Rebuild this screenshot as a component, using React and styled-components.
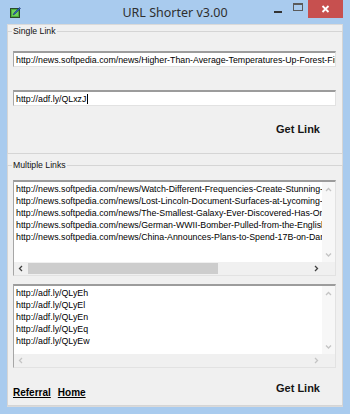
import React from "react";
import styled, { createGlobalStyle } from "styled-components";

const Global = createGlobalStyle`
  html, body { margin: 0; padding: 0; }
  body { background: #a9cbee; font-family: "Liberation Sans", Arial, sans-serif; }
  * { box-sizing: border-box; }
`;

const Frame = styled.div`
  width: 350px;
  height: 414px;
  background: #a9cbee;
  padding: 0 7px 7px;
  display: flex;
  flex-direction: column;
  overflow: hidden;
`;

const TitleBar = styled.div`
  height: 24px;
  display: grid;
  grid-template-columns: 1fr auto 1fr;
  align-items: start;
`;

const AppIcon = styled.div`
  padding: 7px 0 0 3px;
  display: flex;
`;

const Title = styled.div`
  font-family: "Noto Sans", "Open Sans", sans-serif;
  font-size: 12.5px;
  line-height: 16px;
  padding-top: 5px;
  color: #2f2f2f;
  white-space: nowrap;
`;

const Controls = styled.div`
  display: flex;
  justify-content: flex-end;
  align-items: flex-start;
`;

const CtrlButton = styled.div`
  width: ${(p) => p.$w}px;
  height: 18px;
  display: flex;
  align-items: ${(p) => (p.$low ? "flex-end" : "center")};
  justify-content: center;
  padding-bottom: ${(p) => (p.$low ? "5px" : "0")};
  background: ${(p) => p.$bg || "transparent"};
`;

const MinDash = styled.div`
  width: 8px;
  height: 2px;
  background: #333;
`;

const MaxBox = styled.div`
  width: 10px;
  height: 8px;
  border: 1px solid #5a5a5a;
  border-top-width: 2px;
  margin-top: -4px;
`;

const Client = styled.div`
  flex: 1;
  background: #f0f0f0;
  border: 1px solid #dadada;
  display: flex;
  flex-direction: column;
`;

const Group = styled.fieldset`
  margin: ${(p) => p.$mt}px -1px 0;
  padding: ${(p) => p.$pt}px 6px ${(p) => p.$pb}px 5px;
  border: 1px solid #d5d5d5;
  min-width: 0;
  display: flex;
  flex-direction: column;
`;

const Legend = styled.legend`
  font-size: 8.7px;
  line-height: 10px;
  padding: 0 1px;
  margin-left: -1px;
  color: #111;
`;

const Field = styled.div`
  height: 16px;
  margin-top: ${(p) => p.$mt || 0}px;
  background: #fff;
  border-style: solid;
  border-width: 2px 1px 1px 1px;
  border-color: #9c9c9c #e2e2e2 #e2e2e2 #a6a6a6;
  font-size: 8.8px;
  line-height: 12px;
  padding: 0 0 0 2px;
  white-space: pre;
  overflow: hidden;
  color: #000;
  display: flex;
  align-items: center;
`;

const Caret = styled.span`
  display: inline-block;
  width: 1px;
  height: 10px;
  background: #000;
  margin-left: 1px;
`;

const ActionRow = styled.div`
  margin-top: ${(p) => p.$mt}px;
  height: ${(p) => p.$h}px;
  display: flex;
  justify-content: space-between;
  align-items: flex-start;
  padding-right: 16px;
`;

const GetLink = styled.div`
  margin-left: auto;
  font-size: 11px;
  line-height: 13px;
  font-weight: bold;
  color: #151515;
`;

const LinkList = styled.div`
  display: flex;
  gap: 7px;
  padding-top: 6px;
`;

const NavLink = styled.a`
  font-size: 10px;
  line-height: 10px;
  font-weight: bold;
  color: #000;
  text-decoration: underline;
`;

const ListBox = styled.div`
  height: ${(p) => p.$h}px;
  margin-top: ${(p) => p.$mt || 0}px;
  border-style: solid;
  border-width: 2px 1px 1px 1px;
  border-color: #9c9c9c #e2e2e2 #e2e2e2 #a6a6a6;
  background: #fff;
  display: grid;
  grid-template-columns: 1fr 13px;
  grid-template-rows: 1fr 13px;
`;

const ListText = styled.div`
  padding: 1px 0 0 2px;
  font-size: 8.8px;
  line-height: 12px;
  white-space: pre;
  overflow: hidden;
  color: #000;
`;

const VScroll = styled.div`
  background: #f7f7f7;
  display: flex;
  flex-direction: column;
  justify-content: space-between;
  align-items: center;
  padding: 5px 0 4px;
`;

const HScroll = styled.div`
  background: #f0f0f0;
  display: flex;
  align-items: stretch;
`;

const ArrowCell = styled.div`
  width: 13px;
  display: flex;
  align-items: center;
  justify-content: center;
`;

const Track = styled.div`
  flex: 1;
  display: flex;
  align-items: stretch;
  padding: 1px 0;
`;

const Thumb = styled.div`
  width: 190px;
  margin-left: 1px;
  background: #cdcdcd;
`;

const Corner = styled.div`
  background: #f0f0f0;
`;

const Chevron = ({ dir, color }) => {
  const pts = {
    up: "1,4 3.5,1.5 6,4",
    down: "1,1.5 3.5,4 6,1.5",
    left: "4,1 1.5,3.5 4,6",
    right: "2,1 4.5,3.5 2,6",
  }[dir];
  const vertical = dir === "up" || dir === "down";
  return (
    <svg width={vertical ? 7 : 6} height={vertical ? 6 : 7} viewBox={vertical ? "0 0 7 6" : "0 0 6 7"}>
      <polyline points={pts} fill="none" stroke={color} strokeWidth="1.3" />
    </svg>
  );
};

const Icon = () => (
  <svg width="11" height="11" viewBox="0 0 11 11">
    <rect x="0.5" y="1.5" width="9" height="9" fill="#4caf3a" stroke="#2a4a2a" />
    <rect x="2" y="3" width="6" height="6" fill="#6fd15a" />
    <path d="M3 8 L4 6 L9.5 0.5 L10.5 1.5 L5 7 Z" fill="#2d5fb5" stroke="#1b2f6a" strokeWidth="0.5" />
  </svg>
);

const CloseX = () => (
  <svg width="9" height="8" viewBox="0 0 9 8">
    <path d="M1.5 1 L7.5 7 M7.5 1 L1.5 7" stroke="#fff" strokeWidth="1.8" />
  </svg>
);

const longUrls = [
  "http://news.softpedia.com/news/Watch-Different-Frequencies-Create-Stunning-Patterns-in-Sand-Video-405478.shtml",
  "http://news.softpedia.com/news/Lost-Lincoln-Document-Surfaces-at-Lycoming-College-405470.shtml",
  "http://news.softpedia.com/news/The-Smallest-Galaxy-Ever-Discovered-Has-Only-1000-Stars-405463.shtml",
  "http://news.softpedia.com/news/German-WWII-Bomber-Pulled-from-the-English-Channel-405455.shtml",
  "http://news.softpedia.com/news/China-Announces-Plans-to-Spend-17B-on-Dams-405449.shtml",
];

const shortUrls = [
  "http://adf.ly/QLyEh",
  "http://adf.ly/QLyEl",
  "http://adf.ly/QLyEn",
  "http://adf.ly/QLyEq",
  "http://adf.ly/QLyEw",
];

const List = ({ lines, h, mt, active }) => (
  <ListBox $h={h} $mt={mt}>
    <ListText>{lines.join("\n")}</ListText>
    <VScroll>
      <Chevron dir="up" color="#c4c4c4" />
      <Chevron dir="down" color="#c4c4c4" />
    </VScroll>
    <HScroll>
      <ArrowCell>
        <Chevron dir="left" color={active ? "#404040" : "#c4c4c4"} />
      </ArrowCell>
      <Track>{active && <Thumb />}</Track>
      <ArrowCell>
        <Chevron dir="right" color={active ? "#404040" : "#c4c4c4"} />
      </ArrowCell>
    </HScroll>
    <Corner />
  </ListBox>
);

export default function App() {
  return (
    <>
      <Global />
      <Frame>
        <TitleBar>
          <AppIcon>
            <Icon />
          </AppIcon>
          <Title>URL Shorter v3.00</Title>
          <Controls>
            <CtrlButton $w={21} $low>
              <MinDash />
            </CtrlButton>
            <CtrlButton $w={20}>
              <MaxBox />
            </CtrlButton>
            <CtrlButton $w={35} $bg="#c7504f">
              <CloseX />
            </CtrlButton>
          </Controls>
        </TitleBar>
        <Client>
          <Group $mt={1} $pt={15} $pb={17}>
            <Legend>Single Link</Legend>
            <Field>http://news.softpedia.com/news/Higher-Than-Average-Temperatures-Up-Forest-Fire-Risk-405421.shtml</Field>
            <Field $mt={23}>
              http://adf.ly/QLxzJ
              <Caret />
            </Field>
            <ActionRow $mt={17} $h={13}>
              <GetLink>Get Link</GetLink>
            </ActionRow>
          </Group>
          <Group $mt={6} $pt={10} $pb={7}>
            <Legend>Multiple Links</Legend>
            <List lines={longUrls} h={96} active />
            <List lines={shortUrls} h={84} mt={8} />
            <ActionRow $mt={14} $h={16}>
              <LinkList>
                <NavLink href="#">Referral</NavLink>
                <NavLink href="#">Home</NavLink>
              </LinkList>
              <GetLink>Get Link</GetLink>
            </ActionRow>
          </Group>
        </Client>
      </Frame>
    </>
  );
}
